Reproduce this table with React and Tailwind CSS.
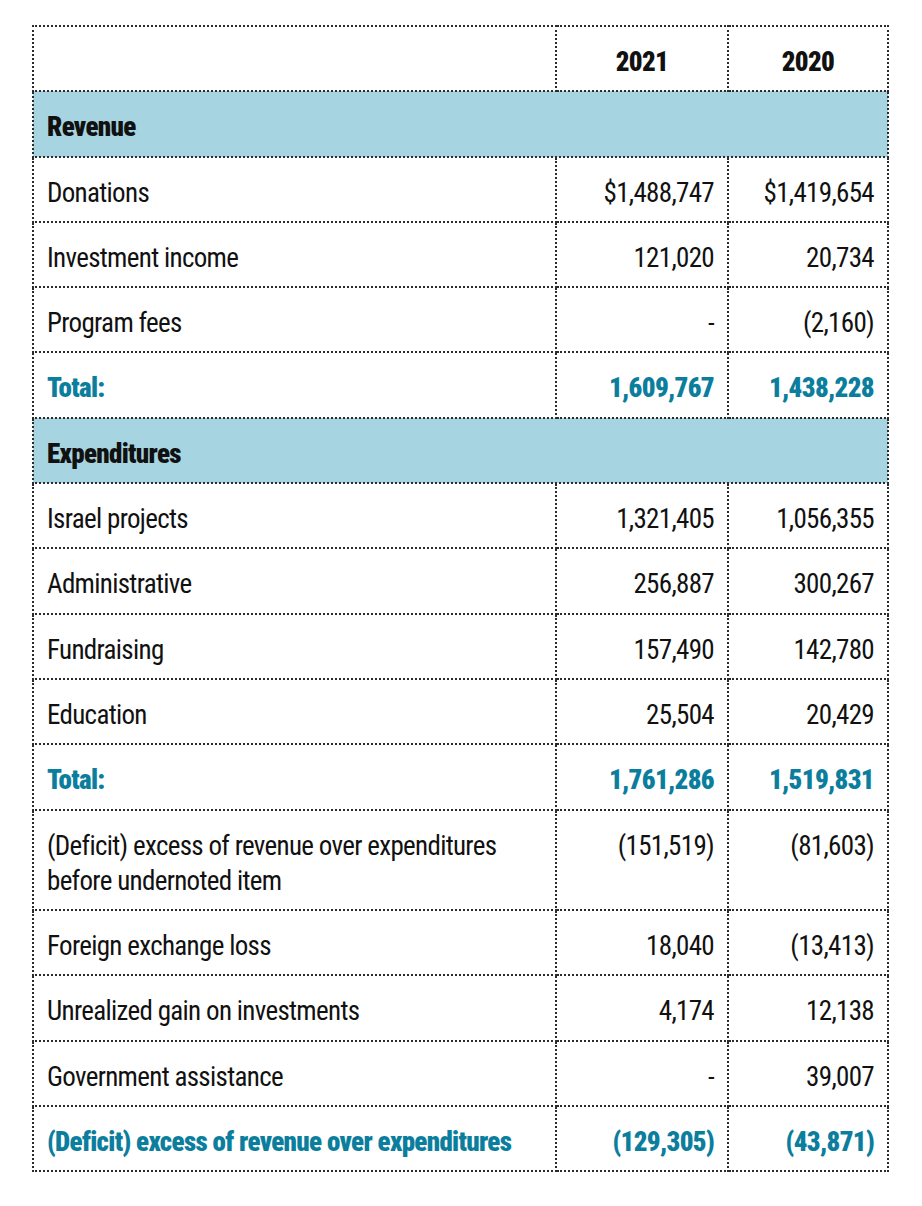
const rows = [
  { type: 'section', label: 'Revenue' },
  { label: 'Donations', a: '$1,488,747', b: '$1,419,654' },
  { label: 'Investment income', a: '121,020', b: '20,734' },
  { label: 'Program fees', a: '-', b: '(2,160)' },
  { type: 'total', label: 'Total:', a: '1,609,767', b: '1,438,228' },
  { type: 'section', label: 'Expenditures' },
  { label: 'Israel projects', a: '1,321,405', b: '1,056,355' },
  { label: 'Administrative', a: '256,887', b: '300,267' },
  { label: 'Fundraising', a: '157,490', b: '142,780' },
  { label: 'Education', a: '25,504', b: '20,429' },
  { type: 'total', label: 'Total:', a: '1,761,286', b: '1,519,831' },
  {
    label: (
      <>
        (Deficit) excess of revenue over expenditures
        <br />
        before undernoted item
      </>
    ),
    a: '(151,519)',
    b: '(81,603)',
  },
  { label: 'Foreign exchange loss', a: '18,040', b: '(13,413)' },
  { label: 'Unrealized gain on investments', a: '4,174', b: '12,138' },
  { label: 'Government assistance', a: '-', b: '39,007' },
  { type: 'total', label: '(Deficit) excess of revenue over expenditures', a: '(129,305)', b: '(43,871)' },
];

const cell =
  'border-2 border-dotted border-[#2b2b2b] px-[13px] pt-[18px] pb-[10px] leading-[35.3px] align-top whitespace-nowrap';

export default function App() {
  return (
    <div className="bg-white min-h-[1206px] pt-[25px] pl-[32px] font-['Roboto_Condensed','Roboto',sans-serif] font-stretch-condensed">
      <table className="table-fixed border-collapse w-[855px] text-[27px] tracking-[-0.025em] text-[#111]">
        <colgroup>
          <col className="w-[523px]" />
          <col className="w-[172px]" />
          <col className="w-[160px]" />
        </colgroup>
        <thead>
          <tr>
            <th className={cell}></th>
            <th className={`${cell} text-center font-black`}>2021</th>
            <th className={`${cell} text-center font-black`}>2020</th>
          </tr>
        </thead>
        <tbody>
          {rows.map((r, i) => {
            if (r.type === 'section') {
              return (
                <tr key={i} className="bg-[#a6d4e0]">
                  <td colSpan={3} className={`${cell} font-black text-left`}>
                    {r.label}
                  </td>
                </tr>
              );
            }
            const tone = r.type === 'total' ? 'font-black text-[#0b7e9e]' : '';
            return (
              <tr key={i}>
                <td className={`${cell} text-left ${tone}`}>{r.label}</td>
                <td className={`${cell} text-right ${tone}`}>{r.a}</td>
                <td className={`${cell} text-right ${tone}`}>{r.b}</td>
              </tr>
            );
          })}
        </tbody>
      </table>
    </div>
  );
}
